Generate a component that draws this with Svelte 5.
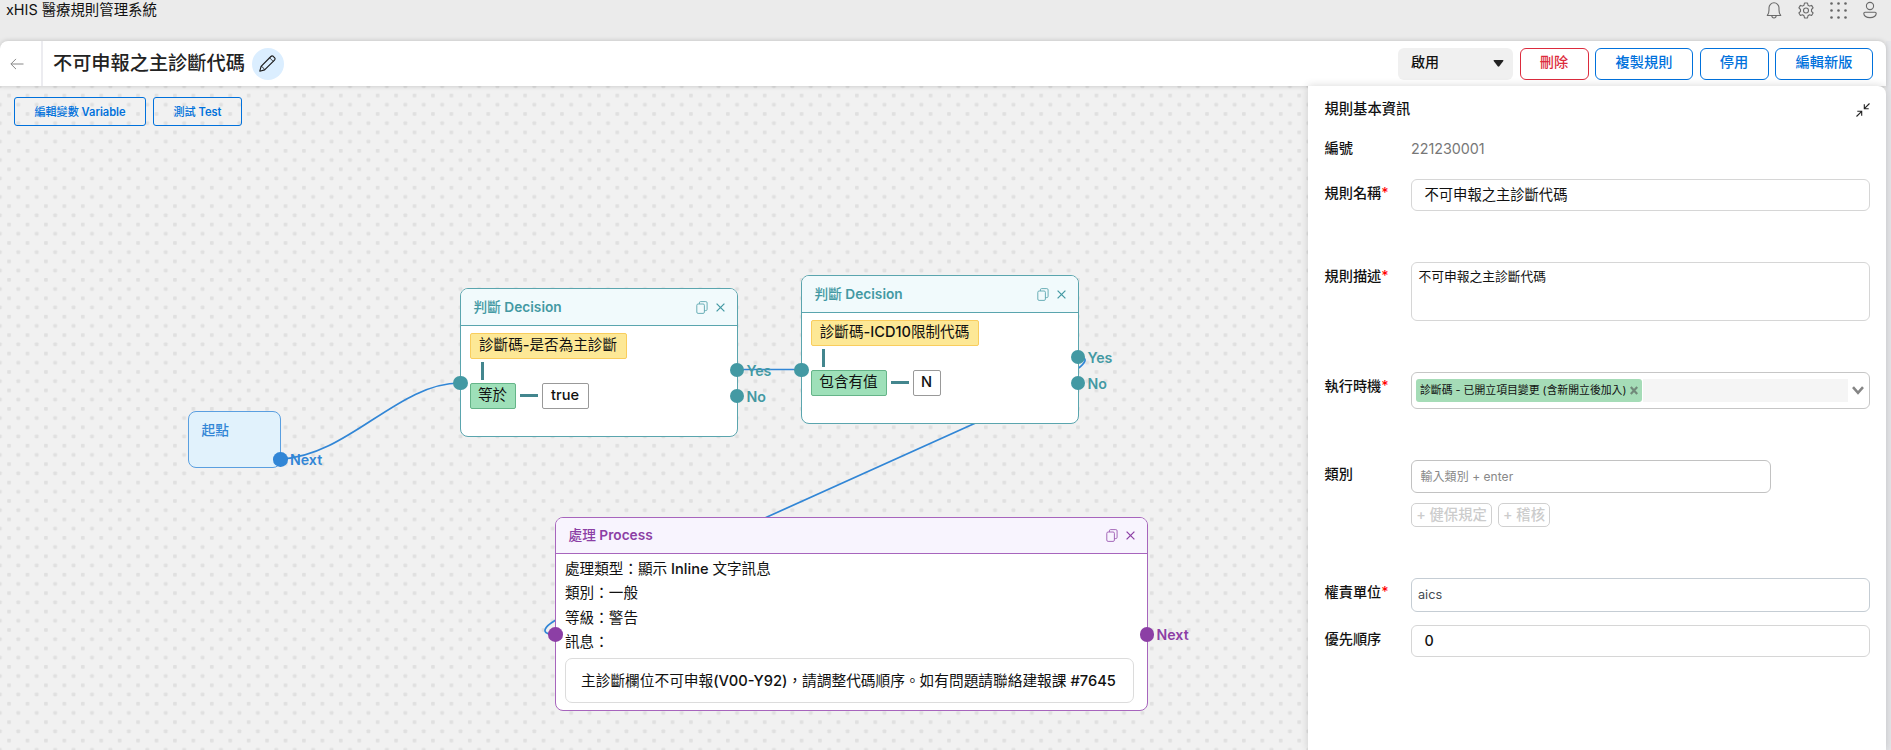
<script>
  const decisions = [
    { x: 460, y: 288, field: '診斷碼-是否為主診斷', op: '等於', value: 'true', fw: 157, ow: 46, vw: 47, inY: 95, yesY: 82, noY: 108 },
    { x: 801, y: 275, field: '診斷碼-ICD10限制代碼', op: '包含有值', value: 'N', fw: 168, ow: 76, vw: 28, inY: 95, yesY: 82, noY: 108 }
  ];
  const details = ['處理類型：顯示 Inline 文字訊息', '類別：一般', '等級：警告', '訊息：'];
  const message = '主診斷欄位不可申報(V00-Y92)，請調整代碼順序。如有問題請聯絡建報課 #7645';

  // Splits a string into Latin and CJK runs, so that each can carry its own weight.
  const runs = (text) => text.split(/([\x20-\x7e]+)/).filter(Boolean);
  const isLatin = (run) => /^[\x20-\x7e]/.test(run);
</script>

{#snippet mixed(text)}{#each runs(text) as run}{#if isLatin(run)}<span class="latin">{run}</span>{:else}{run}{/if}{/each}{/snippet}

{#snippet copyIcon()}
  <svg width="12" height="13" viewBox="0 0 12 13" fill="none" stroke="currentColor" stroke-width=".9" opacity=".85">
    <rect x="0.8" y="3" width="7.6" height="9.4" rx="1.3" />
    <path d="M3.4 3V1.8q0-1.2 1.2-1.2h5.2q1.3 0 1.3 1.3v6.4q0 1.3-1.3 1.3H8.4" />
  </svg>
{/snippet}

{#snippet closeIcon()}
  <svg width="9" height="9" viewBox="0 0 9 9" fill="none" stroke="currentColor" stroke-width="1.25">
    <path d="M.6.6l7.8 7.8M8.4.6L.6 8.4" />
  </svg>
{/snippet}

<div class="app" lang="zh-Hant">
  <header class="topbar">
    <span class="brand">xHIS 醫療規則管理系統</span>
    <div class="top-icons">
      <svg width="16" height="18" viewBox="0 0 16 18" fill="none" stroke="#6a6a6a" stroke-width="1.1">
        <path d="M1.3 14.5c1.4-1.5 1.7-2.7 1.7-5.5V6.8A5 5 0 0 1 13 6.8V9c0 2.8.3 4 1.7 5.5z" stroke-linejoin="round" />
        <path d="M5.8 14.8c.3 2.9 4.1 2.9 4.4 0" />
      </svg>
      <svg width="16" height="17" viewBox="0 0 16 17" fill="none" stroke="#6a6a6a" stroke-width="1.1" stroke-linejoin="round">
        <path d="M6.5 1h3l.5 2.2 1.5.9 2.1-.7 1.5 2.500-1.600 1.600v1.900l1.600 1.600-1.500 2.500-2.100-.7-1.500.9-.5 2.300h-3L6 13.700l-1.500-.9-2.100.7L.9 11l1.600-1.600V7.500L.9 5.900l1.500-2.500 2.100.7L6 3.200z" />
        <circle cx="8" cy="8.5" r="2.5" />
      </svg>
      <svg width="17" height="17" viewBox="0 0 17 17" fill="#666">
        {#each [1.5, 8.5, 15.5] as y}
          {#each [1.5, 8.5, 15.5] as x}
            <circle cx={x} cy={y} r="1.3" />
          {/each}
        {/each}
      </svg>
      <svg width="14" height="18" viewBox="0 0 14 18" fill="none" stroke="#6a6a6a" stroke-width="1.1">
        <circle cx="7" cy="5" r="3.6" />
        <path d="M2 11.300h10q1.200 0 1.200 1.300C12.600 17.900 1.400 17.900.8 12.600q0-1.300 1.200-1.300z" />
      </svg>
    </div>
  </header>

  <div class="titlebar">
    <div class="back">
      <svg width="14" height="12" viewBox="0 0 14 12" fill="none" stroke="#888" stroke-width="1">
        <path d="M13.500 6H.9M6 .9L.9 6 6 11.100" />
      </svg>
    </div>
    <h1>不可申報之主診斷代碼</h1>
    <div class="edit">
      <svg width="17" height="17" viewBox="0 0 17 17" fill="none" stroke="#1b1b1b" stroke-width="1.150" stroke-linejoin="round">
        <path d="M.8 16.200l1.300-4.800L11.900 1.500q1.100-1.100 2.300-.2l1.500 1.500q.9 1.200-.2 2.300L5.600 14.900z" />
        <path d="M10.600 2.800l3.600 3.600M2.100 11.400q2.300.5 3.500 3.500" stroke-width=".8" />
      </svg>
    </div>
    <div class="actions">
      <div class="select">
        啟用
        <svg width="11" height="7" viewBox="0 0 11 7" fill="#222"><path d="M1.300 0h8.400q1.400 0 .6 1.100L6.300 6.200q-.8.9-1.600 0L.7 1.100Q-.1 0 1.300 0z" /></svg>
      </div>
      <button class="red">刪除</button>
      <button>複製規則</button>
      <button>停用</button>
      <button>編輯新版</button>
    </div>
  </div>

  <main>
    <section class="canvas">
      <svg class="grid" width="100%" height="100%">
        <defs>
          <pattern id="dots" width="18.430" height="18.430" patternUnits="userSpaceOnUse" x="7.200" y="7.700">
            <rect width="3.700" height="3.700" rx=".8" fill="#e0e0e0" />
            <rect x="9.215" y="9.215" width="3.700" height="3.700" rx=".8" fill="#e0e0e0" />
          </pattern>
        </defs>
        <rect width="100%" height="100%" fill="url(#dots)" />
      </svg>
      <svg class="edges" width="1308" height="664" viewBox="0 86 1308 664" fill="none" stroke="#3186d6" stroke-width="1.700">
        <path d="M281 459C348 456 398 383 460 383" />
        <path d="M737 369.500H801" />
        <path d="M1078 357C1091 357 1083 365 1078 368.500L975 423.200 767 517 555 620.500C545 626.500 540 633 552 634.500" />
      </svg>

      <div class="tools">
        <button>{@render mixed('編輯變數 Variable')}</button>
        <button>{@render mixed('測試 Test')}</button>
      </div>

      <div class="node start" style="left:188px;top:324.500px">
        <span class="title">起點</span>
        <i class="port" style="left:92.500px;top:49px"></i>
        <b class="tag" style="left:102px;top:48.500px">Next</b>
      </div>

      {#each decisions as d}
        <div class="node decision" style="left:{d.x}px;top:{d.y - 86}px">
          <div class="head">
            <span class="title">{@render mixed('判斷 Decision')}</span>
            {@render copyIcon()}
            {@render closeIcon()}
          </div>
          <div class="body">
            <span class="box yellow" style="width:{d.fw}px">{@render mixed(d.field)}</span>
            <span class="vline"></span>
            <div class="cond">
              <span class="box green" style="width:{d.ow}px">{d.op}</span>
              <span class="hline"></span>
              <span class="box" style="width:{d.vw}px">{@render mixed(d.value)}</span>
            </div>
          </div>
          <i class="port" style="left:0.500px;top:{d.inY}px"></i>
          <i class="port" style="left:277px;top:{d.yesY}px"></i>
          <b class="tag" style="left:286.500px;top:{d.yesY}px">Yes</b>
          <i class="port" style="left:277px;top:{d.noY}px"></i>
          <b class="tag" style="left:286.500px;top:{d.noY}px">No</b>
        </div>
      {/each}

      <div class="node process" style="left:555px;top:431px">
        <div class="head">
          <span class="title">{@render mixed('處理 Process')}</span>
          {@render copyIcon()}
          {@render closeIcon()}
        </div>
        <div class="body">
          {#each details as line}
            <p>{@render mixed(line)}</p>
          {/each}
          <div class="message">{@render mixed(message)}</div>
        </div>
        <i class="port" style="left:0.500px;top:117.500px"></i>
        <i class="port" style="left:592px;top:117.500px"></i>
        <b class="tag" style="left:601.500px;top:117px">Next</b>
      </div>
    </section>

    <aside>
      <div class="panel-head">
        <h2>規則基本資訊</h2>
        <svg width="14" height="14" viewBox="0 0 14 14" fill="none" stroke="#222" stroke-width="1.100">
          <path d="M13.500.5L8.300 5.700M8.300 1.300v4.400h4.400M.5 13.500l5.200-5.200M1.300 8.300h4.400v4.400" />
        </svg>
      </div>
      <div class="row id"><span class="label">編號</span><span class="code">221230001</span></div>
      <div class="row" style="height:83px">
        <span class="label">規則名稱<em>*</em></span>
        <div class="field">不可申報之主診斷代碼</div>
      </div>
      <div class="row" style="height:110px">
        <span class="label">規則描述<em>*</em></span>
        <div class="field area">不可申報之主診斷代碼</div>
      </div>
      <div class="row" style="height:88px">
        <span class="label">執行時機<em>*</em></span>
        <div class="field multi">
          <span class="pill">
            診斷碼 - 已開立項目變更 (含新開立後加入)
            <svg width="8" height="9" viewBox="0 0 8 9" fill="none" stroke="#71897a" stroke-width="2.200"><path d="M.8 1.100l6.400 6.800M7.200 1.100L.8 7.900" /></svg>
          </span>
          <span class="filler"></span>
          <svg width="12" height="9" viewBox="0 0 12 9" fill="none" stroke="#858585" stroke-width="2.600"><path d="M1 1.200l5 5.600 5-5.600" /></svg>
        </div>
      </div>
      <div class="row" style="height:118px">
        <span class="label">類別</span>
        <div>
          <div class="field category">輸入類別 + enter</div>
          <div class="chips"><span style="width:81px">+ 健保規定</span><span style="width:52px">+ 稽核</span></div>
        </div>
      </div>
      <div class="row" style="height:47px">
        <span class="label">權責單位<em>*</em></span>
        <div class="field unit">aics</div>
      </div>
      <div class="row">
        <span class="label">優先順序</span>
        <div class="field num">0</div>
      </div>
    </aside>
  </main>
</div>

<style>
  :global(body) { margin: 0; background: #ebebeb; }
  .app {
    width: 1891px; height: 750px; overflow: hidden; display: flex; flex-direction: column;
    background: linear-gradient(90deg, #ebebeb 1886px, #e5e6e9 1886px);
    color: #111; font-family: Inter, "Noto Sans CJK TC", sans-serif; box-sizing: border-box;
  }
  .app * { box-sizing: border-box; }
  button { font-family: inherit; padding: 0; }
  svg { flex: none; display: block; }

  .topbar { height: 41px; flex: none; display: flex; justify-content: space-between; background: #ebebeb; }
  .brand { font-size: 14.400px; line-height: 20px; padding-left: 6px; white-space: nowrap; }
  .top-icons { display: flex; gap: 16px; height: 20px; align-items: center; padding-right: 14px; }

  .titlebar {
    height: 45px; width: 1886px; flex: none; display: flex; align-items: center; position: relative; z-index: 2;
    background: #fff; border-radius: 8px 8px 0 0; box-shadow: 0 0 5px rgba(0, 0, 0, .2);
  }
  .back { width: 43px; height: 45px; border-right: 2px solid #ececf0; display: flex; align-items: center; padding-left: 10px; }
  h1 { margin: 0 0 0 10px; font-size: 19.200px; font-weight: 500; line-height: 45px; color: #222; white-space: nowrap; }
  .edit { width: 32px; height: 32px; border-radius: 50%; background: #dbeeff; margin-left: 7px; display: flex; align-items: center; justify-content: center; }
  .actions { margin-left: auto; display: flex; gap: 6.500px; padding-right: 13px; }
  .actions button { width: 69px; height: 32px; border: 1px solid #0071dc; border-radius: 6px; background: #fff; color: #0071dc; font-size: 14.200px; font-weight: 500; white-space: nowrap; line-height: 20px; padding-bottom: 3px; }
  .actions button:nth-of-type(even) { width: 98px; }
  .actions .red { border-color: #dc2b3d; color: #dc2b3d; }
  .select { width: 115px; height: 32px; border-radius: 6px; background: #f0f0f0; display: flex; align-items: center; justify-content: space-between; padding: 0 9px 0 13px; font-size: 14px; font-weight: 500; line-height: 28px; padding-bottom: 3px; }
  .select svg { position: relative; top: 1.500px; }

  main { flex: 1; display: flex; min-height: 0; width: 1886px; }
  .canvas { flex: 1; position: relative; background: #f1f1f1; overflow: hidden; }
  .grid, .edges { position: absolute; left: 0; top: 0; }
  .tools { position: relative; display: flex; gap: 7px; padding: 11px 0 0 14px; }
  .tools button { width: 132px; height: 29px; border: 1px solid #0071dc; border-radius: 3px; background: transparent; color: #0071dc; font-size: 11.100px; font-weight: 500; padding-bottom: 2px; }
  .tools button + button { width: 89px; }
  .tools .latin, .title .latin { font-weight: 600; }

  .node { position: absolute; border: 1px solid var(--line); border-radius: 8px; background: #fff; color: var(--main); }
  .start { --main: #3186d6; --line: #5a9fe0; width: 93px; height: 57px; background: #e1f2fc; padding: 7px 12.500px; }
  .decision { --main: #4399a3; --line: #5aa5ae; width: 277.500px; height: 149px; }
  .process { --main: #8c3fa5; --line: #a765bd; width: 592.500px; height: 194px; }
  .title { font-size: 13.700px; font-weight: 500; line-height: 20px; white-space: nowrap; }
  .head { height: 37px; display: flex; align-items: center; padding: 0 11.500px 0 12.500px; border-bottom: 1px solid var(--line); border-radius: 7px 7px 0 0; background: #f1fafc; gap: 8.500px; }
  .head .title { margin-right: auto; }
  .process .head { background: #f8f4fe; height: 36px; }
  .process .title { position: relative; top: -.5px; }
  .body { padding: 7px 9px; color: #111; font-size: 14.600px; }
  .body .latin { font-weight: 500; }
  .box { display: block; flex: none; height: 26px; line-height: 22px; border: 1px solid #999; border-radius: 2px; text-align: center; white-space: nowrap; font-weight: 400; padding-right: 1px; }
  .yellow { background: #fde896; border-color: #f9cd5d; }
  .green { background: #9ee0b9; border-color: #65b488; }
  .vline { display: block; width: 2.500px; height: 18px; margin: 3px 0 2.500px 11px; background: #43868e; }
  .cond { display: flex; align-items: center; gap: 4px; }
  .hline { width: 18px; height: 2.500px; background: #43868e; flex: none; }
  .port { position: absolute; width: 14.600px; height: 14.600px; margin: -8.300px 0 0 -8.300px; border-radius: 50%; background: var(--main); }
  .tag { position: absolute; line-height: 20px; margin-top: -10px; margin-left: -1px; font-size: 14.200px; font-weight: 600; color: var(--main); }
  .process .body { padding: 3px 9px; }
  p { margin: 0; line-height: 24.400px; white-space: nowrap; }
  .message { margin-top: 3px; width: 569px; height: 45px; border: 1px solid #dcdcdc; border-radius: 7px; line-height: 44px; padding-left: 15px; white-space: nowrap; font-size: 14.700px; }

  aside { width: 578px; flex: none; background: #fff; border-radius: 0 8px 0 0; padding: 12px 16px 0 17px; position: relative; z-index: 3; box-shadow: 0 0 8px rgba(0, 0, 0, .16); }
  .panel-head { height: 24px; display: flex; align-items: center; justify-content: space-between; }
  h2 { margin: 0 0 2px -.5px; font-size: 14.300px; font-weight: 500; line-height: 20px; }
  .row { display: grid; grid-template-columns: 86px 1fr; align-items: start; }
  .id { margin: 15px 0 20px; height: 22px; align-items: center; }
  .label { font-size: 14.200px; font-weight: 500; line-height: 20px; margin: 4px 0 0 -.5px; white-space: nowrap; }
  .id .label { margin-top: 0; }
  em { color: #f00; font-style: normal; }
  .code { font-size: 14.300px; color: #777; }
  .field { height: 32px; border: 1px solid #d6d6d6; border-radius: 6px; background: #fff; line-height: 30px; font-size: 14.300px; padding-left: 12.500px; white-space: nowrap; }
  .area { height: 59px; font-size: 12.750px; line-height: 28px; padding-left: 6.500px; }
  .num { font-weight: 500; }
  .multi { height: 37px; display: flex; align-items: center; border-color: #c6c6c6; padding: 0 5px 0 4px; }
  .pill { height: 23px; width: 226px; border-radius: 3px; background: #a5dcb7; display: flex; align-items: center; justify-content: space-between; padding: 0 4px; font-size: 10.850px; line-height: 23px; }
  .filler { flex: 1; height: 23px; margin: 0 4px 0 1px; background: #f5f5f5; }
  .category { width: 360px; height: 33px; border-color: #c2c2c2; font-size: 12px; color: #888; padding-left: 8.500px; line-height: 32px; letter-spacing: .05px; }
  .chips { display: flex; gap: 6px; margin-top: 10px; }
  .chips span { height: 24px; border: 1px solid #d0d0d0; border-radius: 5px; line-height: 22px; text-align: center; font-size: 14.300px; font-weight: 500; color: #ccc; white-space: nowrap; }
  .unit { height: 34px; border-color: #c5cdd4; font-size: 12.700px; color: #444c52; padding-left: 6px; line-height: 32px; }
</style>
